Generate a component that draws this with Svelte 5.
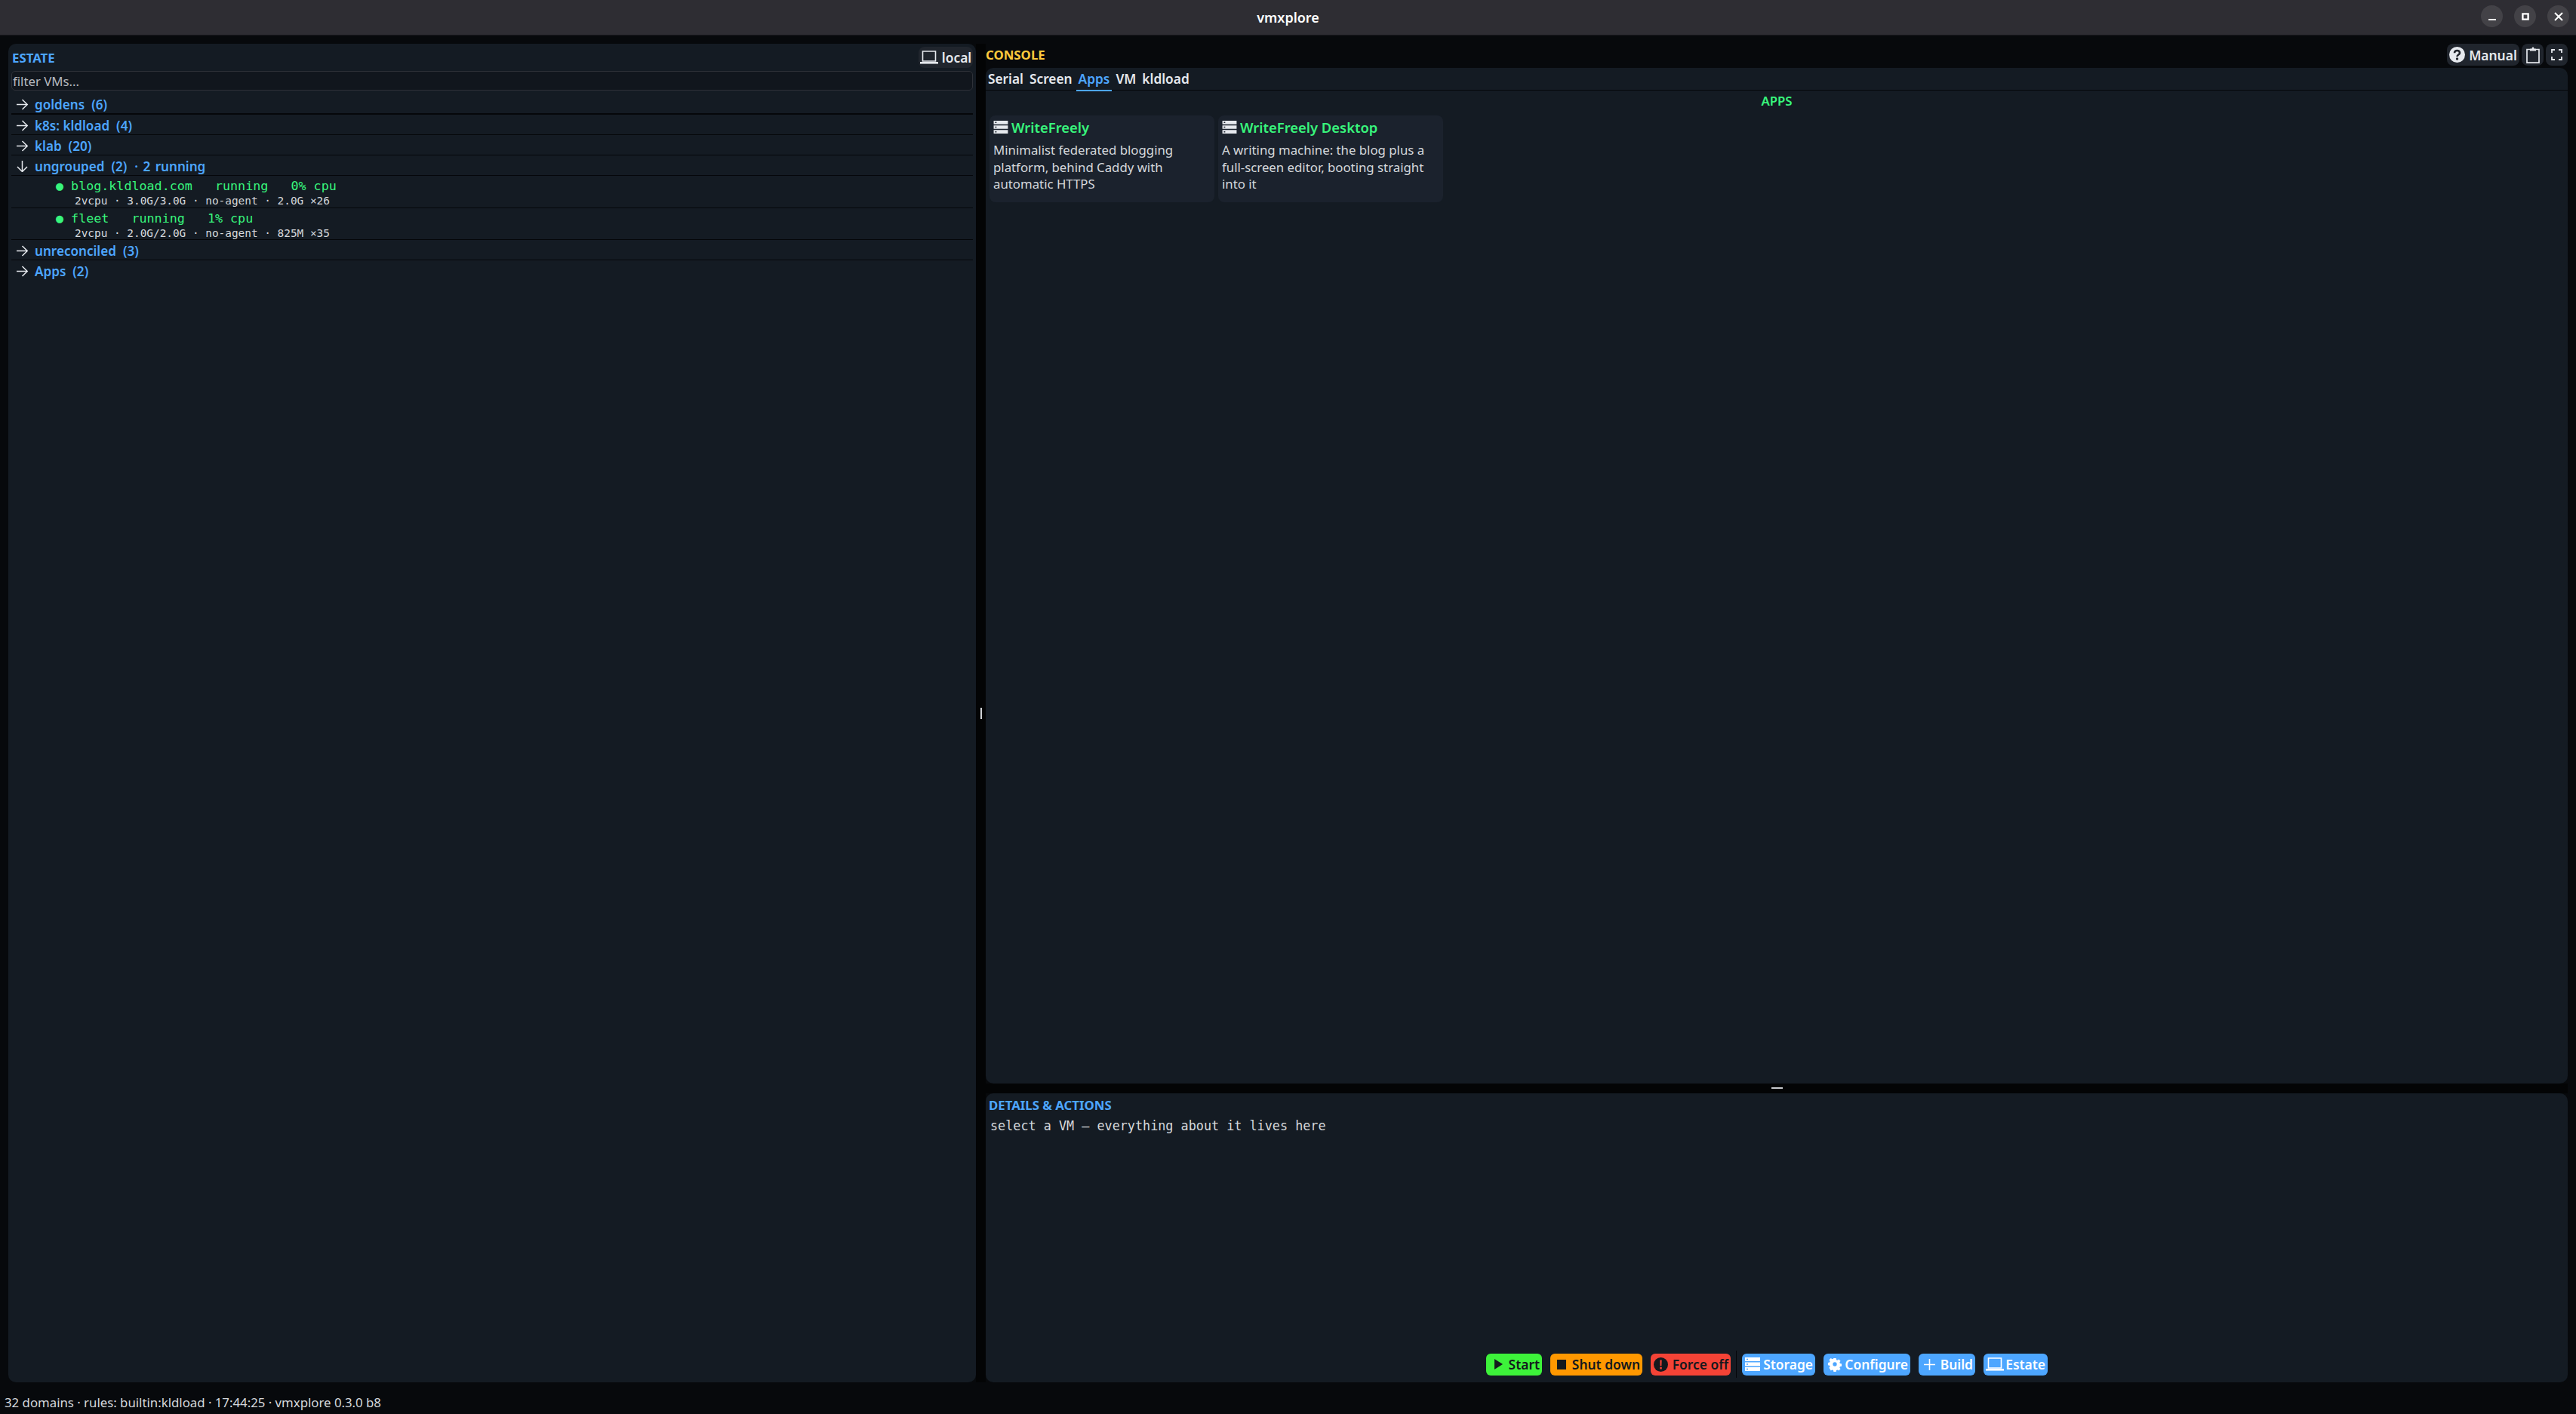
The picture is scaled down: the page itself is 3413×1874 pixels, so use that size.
<script>
	const groups = [
		{ label: 'goldens', count: '(6)' },
		{ label: 'k8s: kldload', count: '(4)' },
		{ label: 'klab', count: '(20)' },
		{
			label: 'ungrouped',
			count: '(2)',
			extra: '· 2 running',
			open: true,
			vms: [
				{ line: '● blog.kldload.com   running   0% cpu', meta: '2vcpu · 3.0G/3.0G · no-agent · 2.0G ×26' },
				{ line: '● fleet   running   1% cpu', meta: '2vcpu · 2.0G/2.0G · no-agent · 825M ×35' }
			]
		},
		{ label: 'unreconciled', count: '(3)' },
		{ label: 'Apps', count: '(2)' }
	];

	const tabs = ['Serial', 'Screen', 'Apps', 'VM', 'kldload'];

	const apps = [
		{ name: 'WriteFreely', desc: 'Minimalist federated blogging platform, behind Caddy with automatic HTTPS' },
		{ name: 'WriteFreely Desktop', desc: 'A writing machine: the blog plus a full-screen editor, booting straight into it' }
	];
</script>

{#snippet serverIcon(w, h)}
	<svg width={w} height={h} viewBox="0 0 20 18" aria-hidden="true">
		<path fill="currentColor" fill-rule="evenodd" d="M0 0h20v5H0zM2 1.7v1.6h2V1.7zM0 6.5h20v5H0zM2 8.2v1.6h2V8.2zM0 13h20v5H0zM2 14.7v1.6h2v-1.6z" />
	</svg>
{/snippet}

{#snippet laptopIcon()}
	<svg width="24" height="18" viewBox="0 0 24 18" aria-hidden="true">
		<path fill="none" stroke="currentColor" stroke-width="1.6" d="M3.5 1h17v13h-17z" />
		<path fill="currentColor" d="M0 15h24v2.6H0z" />
	</svg>
{/snippet}

<div class="app">
	<header class="titlebar">
		<span class="title">vmxplore</span>
		<div class="winbtns">
			<button class="winbtn" aria-label="minimize">
				<svg width="12" height="12" viewBox="0 0 12 12"><path fill="currentColor" d="M1 9h10v2H1z" /></svg>
			</button>
			<button class="winbtn" aria-label="maximize">
				<svg width="12" height="12" viewBox="0 0 12 12"><path fill="none" stroke="currentColor" stroke-width="2.4" d="M2.4 2.4h7.2v7.2H2.4z" /></svg>
			</button>
			<button class="winbtn" aria-label="close">
				<svg width="12" height="12" viewBox="0 0 12 12"><path fill="none" stroke="currentColor" stroke-width="2" d="M1 1l10 10M11 1L1 11" /></svg>
			</button>
		</div>
	</header>

	<main class="main">
		<section class="panel estate">
			<div class="estate-head">
				<span class="heading blue">ESTATE</span>
				<button class="ghost local">{@render laptopIcon()}<span>local</span></button>
			</div>
			<div class="filter">filter VMs...</div>
			<div class="tree">
				{#each groups as g, i}
					<div class="row" class:thick={i === 0}>
						<svg class="arrow" width="17" height="15" viewBox="0 0 17 15" aria-hidden="true">
							{#if g.open}
								<path fill="none" stroke="currentColor" stroke-width="1.5" d="M8.5 0v14M2 8l6.5 6.5L15 8" />
							{:else}
								<path fill="none" stroke="currentColor" stroke-width="1.5" d="M1 7.5h14.5M8.5 1l6.7 6.5L8.5 14" />
							{/if}
						</svg>
						<span class="group-label">{g.label}</span>
						<span class="group-count">{g.count}</span>
						{#if g.extra}<span class="group-extra">{g.extra}</span>{/if}
					</div>
					{#if g.vms}
						{#each g.vms as vm}
							<div class="vm">
								<div class="vm-line">{vm.line}</div>
								<div class="vm-meta">{vm.meta}</div>
							</div>
						{/each}
					{/if}
				{/each}
			</div>
		</section>

		<div class="vsplit"><span class="vhandle"></span></div>

		<div class="right">
			<div class="console-head">
				<span class="heading amber">CONSOLE</span>
				<div class="console-tools">
					<button class="ghost manual">
						<svg width="21" height="21" viewBox="0 0 21 21" aria-hidden="true">
							<circle cx="10.5" cy="10.5" r="10.5" fill="#e6e9ee" />
							<path fill="none" stroke="#20242b" stroke-width="2.6" d="M7 8.2c0-2 1.5-3.2 3.5-3.2s3.5 1.2 3.5 3c0 2.6-3.5 2.4-3.5 5" />
							<circle cx="10.5" cy="16" r="1.7" fill="#20242b" />
						</svg>
						<span>Manual</span>
					</button>
					<button class="ghost square" aria-label="clipboard">
						<svg width="18" height="22" viewBox="0 0 18 22" aria-hidden="true">
							<path fill="none" stroke="#e6e9ee" stroke-width="1.7" d="M5 3.5H1v17.6h16V3.5h-4" />
							<path fill="#e6e9ee" d="M5 2.6h2.4C7.6 1 8.2.4 9 .4s1.4.6 1.6 2.2H13v3H5z" />
						</svg>
					</button>
					<button class="ghost square" aria-label="fullscreen">
						<svg width="15" height="15" viewBox="0 0 15 15" aria-hidden="true">
							<path fill="none" stroke="#e6e9ee" stroke-width="1.8" d="M1 5V1h4M10 1h4v4M14 10v4h-4M5 14H1v-4" />
						</svg>
					</button>
				</div>
			</div>

			<section class="panel console">
				<nav class="tabs">
					{#each tabs as t}
						<span class="tab" class:active={t === 'Apps'}>{t}</span>
					{/each}
				</nav>
				<div class="apps-title">APPS</div>
				<div class="cards">
					{#each apps as a}
						<article class="card">
							<div class="card-title">
								<span class="card-icon">{@render serverIcon(20, 17)}</span>
								<span>{a.name}</span>
							</div>
							<p class="card-desc">{a.desc}</p>
						</article>
					{/each}
				</div>
			</section>

			<div class="hsplit"><span class="hhandle"></span></div>

			<section class="panel details">
				<div class="heading blue details-title">DETAILS &amp; ACTIONS</div>
				<div class="details-hint">select a VM — everything about it lives here</div>
				<div class="actions">
					<button class="act green w-start">
						<svg width="11" height="14" viewBox="0 0 11 14" aria-hidden="true"><path fill="currentColor" d="M0 0l11 7L0 14z" /></svg>
						Start
					</button>
					<button class="act orange w-shut">
						<svg width="12" height="13" viewBox="0 0 12 13" aria-hidden="true"><path fill="currentColor" d="M0 0h12v13H0z" /></svg>
						Shut down
					</button>
					<button class="act red w-force">
						<svg width="19" height="19" viewBox="0 0 19 19" aria-hidden="true">
							<circle cx="9.5" cy="9.5" r="9.5" fill="currentColor" />
							<path fill="#f44336" d="M8.3 3.5h2.4l-.3 8H8.6zM8.2 13h2.6v2.6H8.2z" />
						</svg>
						Force off
					</button>
					<span class="act-sep"></span>
					<button class="act blue-btn w-storage">
						{@render serverIcon(20, 18)}
						Storage
					</button>
					<button class="act blue-btn w-config">
						<svg width="20" height="20" viewBox="0 0 24 24" aria-hidden="true">
							<path fill="currentColor" fill-rule="evenodd" d="M9.6 0h4.8l.7 3.3 2 .8 2.8-1.8 3.4 3.4-1.8 2.8.8 2 3.3.7v4.8l-3.3.7-.8 2 1.8 2.8-3.4 3.4-2.8-1.8-2 .8-.7 3.3H9.6l-.7-3.3-2-.8-2.8 1.8L.7 19.3l1.8-2.8-.8-2-3.3-.7V9l3.3-.7.8-2L.7 3.5 4.1.1l2.8 1.8 2-.8zM12 8a4 4 0 100 8 4 4 0 000-8z" transform="translate(2.4 2.4) scale(.8)" />
						</svg>
						Configure
					</button>
					<button class="act blue-btn w-build">
						<svg width="15" height="15" viewBox="0 0 15 15" aria-hidden="true"><path fill="none" stroke="currentColor" stroke-width="1.6" d="M7.5 0v15M0 7.5h15" /></svg>
						Build
					</button>
					<button class="act blue-btn w-estate">
						{@render laptopIcon()}
						Estate
					</button>
				</div>
			</section>
		</div>
	</main>

	<footer class="status">32 domains · rules: builtin:kldload · 17:44:25 · vmxplore 0.3.0 b8</footer>
</div>

<style>
	:global(body) {
		margin: 0;
		background: #07090c;
	}

	.app {
		display: flex;
		flex-direction: column;
		height: 1874px;
		overflow: hidden;
		font-family: 'Noto Sans', sans-serif;
		font-size: 16.8px;
		color: #e6e9ee;
		background: #07090c;
	}

	button {
		font: inherit;
		border: 0;
		padding: 0;
		cursor: pointer;
	}

	.titlebar {
		position: relative;
		flex: none;
		height: 46px;
		display: flex;
		align-items: center;
		justify-content: center;
		background: #2e2d33;
		border-bottom: 1px solid #1a1a1e;
	}

	.title {
		font-size: 18px;
		font-weight: 600;
		color: #fff;
	}

	.winbtns {
		position: absolute;
		right: 9px;
		top: 7px;
		display: flex;
		gap: 15px;
	}

	.winbtn {
		width: 29px;
		height: 29px;
		border-radius: 50%;
		display: flex;
		align-items: center;
		justify-content: center;
		background: #434247;
		color: #fff;
	}

	.main {
		flex: 1;
		min-height: 0;
		display: grid;
		grid-template-columns: 1282px 13px 2096px;
		padding: 11px 11px 0;
	}

	.panel {
		background: #141b23;
		border-radius: 10px;
	}

	.heading {
		font-weight: 700;
		font-size: 16.8px;
	}

	.blue {
		color: #4da6ff;
	}

	.amber {
		color: #ffc93c;
	}

	.estate {
		display: flex;
		flex-direction: column;
		padding: 4px 4px 0 4px;
	}

	.estate-head {
		height: 32px;
		display: flex;
		align-items: flex-start;
		justify-content: space-between;
		padding-left: 1px;
	}

	.estate-head .heading {
		line-height: 30px;
	}

	.ghost {
		display: flex;
		align-items: center;
		justify-content: center;
		gap: 5px;
		background: #20252d;
		color: #e6e9ee;
		border-radius: 8px;
		font-weight: 600;
		font-size: 17.4px;
	}

	.local {
		width: 72px;
		height: 28px;
	}

	.filter {
		height: 24px;
		line-height: 26px;
		flex: none;
		border: 1px solid #2e3138;
		border-radius: 5px;
		background: #11161d;
		color: #b5b8bd;
		padding-left: 1px;
	}

	.tree {
		display: flex;
		flex-direction: column;
	}

	.row {
		height: 23.5px;
		padding-top: 2.5px;
		display: flex;
		align-items: center;
		padding-left: 6px;
		border-bottom: 1px solid #05070a;
		font-weight: 600;
		font-size: 17.1px;
		color: #4da6ff;
	}

	.row.thick {
		height: 24px;
		padding-top: 6px;
		border-bottom-width: 2px;
	}

	.row:last-child {
		border-bottom: 0;
	}

	.arrow {
		flex: none;
		color: #e6e9ee;
		margin-right: 8px;
	}

	.group-count {
		margin-left: 9px;
	}

	.group-extra {
		margin-left: 10px;
		word-spacing: 2px;
	}

	.vm {
		height: 41.6px;
		border-bottom: 1px solid #05070a;
		font-family: 'DejaVu Sans Mono', monospace;
	}

	.vm-line {
		font-size: 16.7px;
		line-height: 24px;
		padding-top: 1px;
		padding-left: 59px;
		color: #38f57c;
		white-space: pre;
	}

	.vm-meta {
		font-size: 14.4px;
		line-height: 17px;
		padding-left: 84px;
		color: #d5d8dc;
		white-space: pre;
	}

	.vsplit {
		position: relative;
		background: #030405;
	}

	.vhandle {
		position: absolute;
		left: 6px;
		top: 880px;
		width: 2px;
		height: 15px;
		background: #d0d2d6;
	}

	.right {
		display: flex;
		flex-direction: column;
		min-height: 0;
	}

	.console-head {
		flex: none;
		height: 32px;
		display: flex;
		justify-content: space-between;
		padding-bottom: 3px;
		box-sizing: border-box;
	}

	.console-head .heading {
		line-height: 30px;
	}

	.console-tools {
		display: flex;
		gap: 3px;
	}

	.manual {
		width: 96px;
		height: 29px;
	}

	.square {
		width: 29px;
		height: 29px;
	}

	.console {
		flex: none;
		height: 1346px;
		display: flex;
		flex-direction: column;
		overflow: hidden;
	}

	.tabs {
		height: 29px;
		flex: none;
		display: flex;
		gap: 2px;
		border-bottom: 1px solid #05070a;
	}

	.tab {
		padding: 0 3px;
		font-size: 17.3px;
		font-weight: 600;
		line-height: 30px;
		color: #e6e9ee;
		height: 29px;
		box-sizing: border-box;
	}

	.tab.active {
		color: #4da6ff;
		border-bottom: 2px solid #4da6ff;
		height: 31px;
	}

	.apps-title {
		height: 33px;
		line-height: 28px;
		text-align: center;
		font-size: 16.8px;
		font-weight: 600;
		color: #38f57c;
	}

	.cards {
		display: flex;
		gap: 5px;
		padding-left: 5px;
	}

	.card {
		width: 298px;
		height: 115px;
		box-sizing: border-box;
		padding: 3px 5px;
		background: #1b222d;
		border-radius: 8px;
	}

	.card-title {
		display: flex;
		align-items: center;
		gap: 4px;
		height: 24px;
		font-size: 18.4px;
		font-weight: 600;
		color: #38f57c;
	}

	.card-icon {
		display: flex;
		color: #e6e9ee;
	}

	.card-desc {
		margin: 8px 0 0;
		font-size: 16.8px;
		line-height: 22.7px;
		color: #d5d8dc;
	}

	.hsplit {
		position: relative;
		flex: none;
		height: 13px;
		background: #030405;
	}

	.hhandle {
		position: absolute;
		left: 1041px;
		top: 5px;
		width: 15px;
		height: 2px;
		background: #c8cace;
	}

	.details {
		flex: 1;
		min-height: 0;
		display: flex;
		flex-direction: column;
		padding: 0 4px;
	}

	.details-title {
		line-height: 31px;
	}

	.details-hint {
		font-family: 'DejaVu Sans Mono', monospace;
		font-size: 16.8px;
		line-height: 24px;
		color: #d5d8dc;
		padding-left: 2px;
	}

	.actions {
		margin-top: auto;
		margin-bottom: 6px;
		padding-right: 27px;
		display: flex;
		justify-content: center;
		align-items: center;
		gap: 11px;
	}

	.act {
		height: 29px;
		flex: none;
		box-sizing: border-box;
		display: flex;
		align-items: center;
		justify-content: space-between;
		padding-right: 2.5px;
		border-radius: 6px;
		font-size: 17.4px;
		font-weight: 600;
		white-space: nowrap;
	}

	.w-start { width: 74px; padding-left: 11px; }
	.w-shut { width: 122px; padding-left: 9px; }
	.w-force { width: 106px; padding-left: 4px; }
	.w-storage { width: 97px; padding-left: 4px; }
	.w-config { width: 115px; padding-left: 5px; }
	.w-build { width: 75px; padding-left: 7px; }
	.w-estate { width: 85px; padding-left: 3px; }

	.green {
		background: #3df23a;
		color: #14181d;
	}

	.orange {
		background: #ff9800;
		color: #14181d;
	}

	.red {
		background: #f44336;
		color: #14181d;
	}

	.act-sep {
		width: 1px;
		height: 36px;
		margin: 0 -4px;
		background: #05070a;
	}

	.blue-btn {
		background: #4da6ff;
		color: #fff;
	}

	.status {
		flex: none;
		height: 42px;
		box-sizing: border-box;
		padding: 16px 0 0 6px;
		line-height: 22px;
		font-size: 16.8px;
		color: #d5d8dc;
		background: #07090c;
	}
</style>
